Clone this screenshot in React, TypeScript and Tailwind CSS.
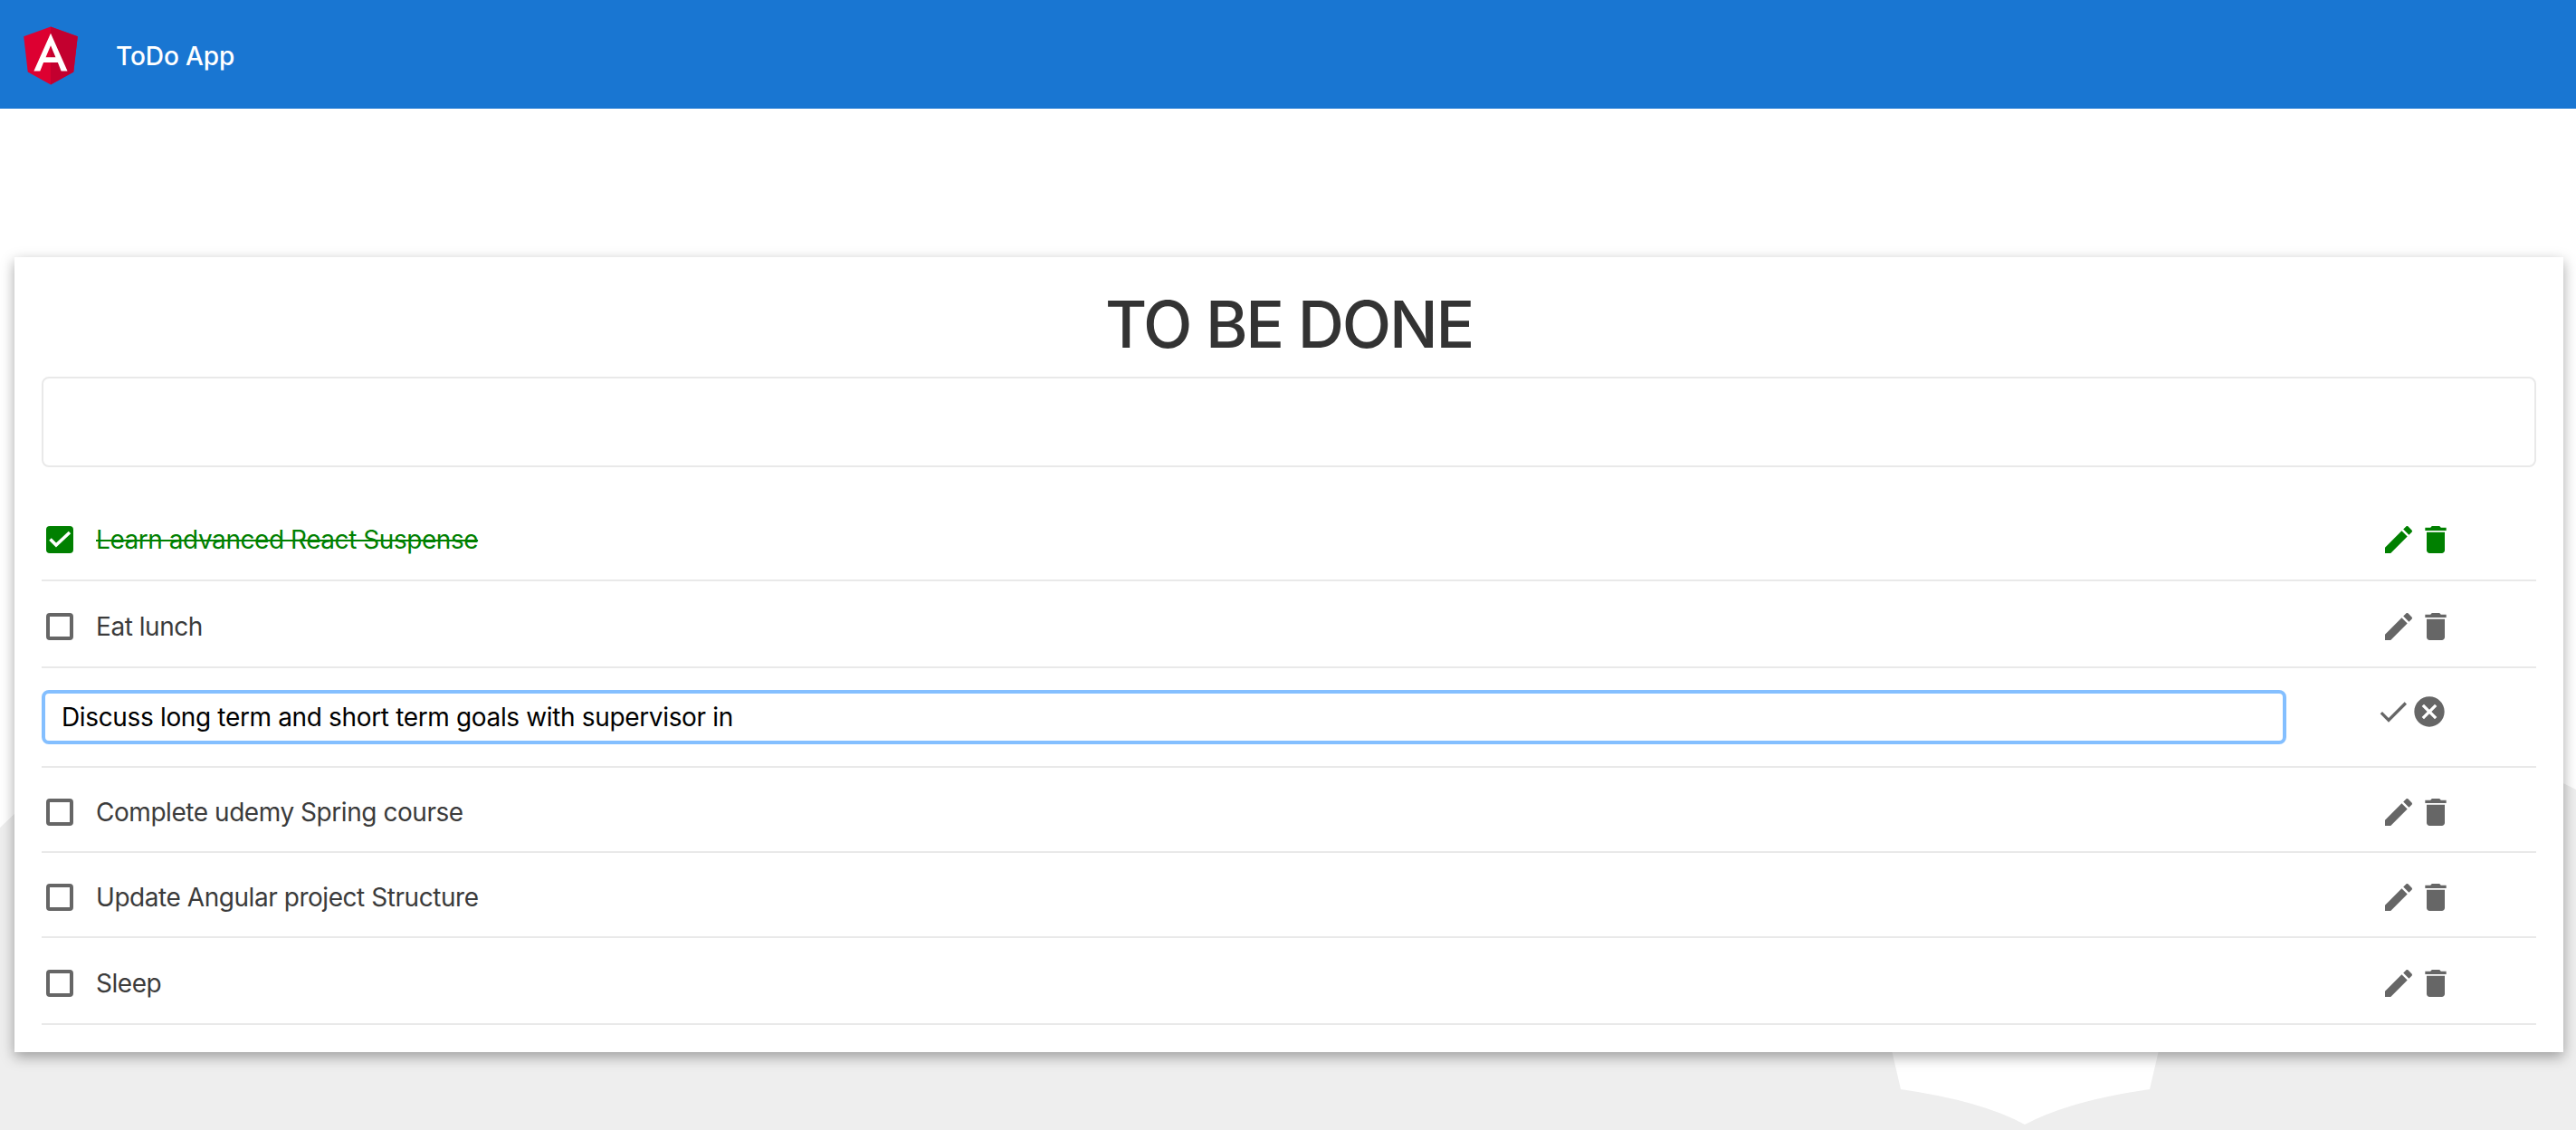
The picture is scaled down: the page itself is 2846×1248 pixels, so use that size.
import React from "react";

const todos = [
  { id: 1, text: "Learn advanced React Suspense", done: true, height: "h-[96px]" },
  { id: 2, text: "Eat lunch", done: false, height: "h-[96px]" },
  { id: 3, text: "Discuss long term and short term goals with supervisor in", editing: true },
  { id: 4, text: "Complete udemy Spring course", done: false, height: "h-[94px]" },
  { id: 5, text: "Update Angular project Structure", done: false, height: "h-[94px]" },
  { id: 6, text: "Sleep", done: false, height: "h-[96px]" },
];

const Icon = ({ d }: { d: string }) => (
  <svg viewBox="0 0 24 24" className="w-10 h-10 shrink-0" fill="currentColor">
    <path d={d} />
  </svg>
);

const editPath =
  "M3 17.25V21h3.75L17.81 9.94l-3.75-3.75L3 17.25zM20.71 7.04c.39-.39.39-1.02 0-1.41l-2.34-2.34c-.39-.39-1.02-.39-1.41 0l-1.83 1.83 3.75 3.75 1.83-1.83z";
const deletePath =
  "M6 19c0 1.1.9 2 2 2h8c1.1 0 2-.9 2-2V7H6v12zM19 4h-3.5l-1-1h-5l-1 1H5v2h14V4z";
const donePath = "M9 16.2L4.8 12l-1.4 1.4L9 19 21 7l-1.4-1.4L9 16.2z";
const cancelPath =
  "M12 2C6.47 2 2 6.47 2 12s4.47 10 10 10 10-4.47 10-10S17.53 2 12 2zm5 13.59L15.59 17 12 13.41 8.41 17 7 15.59 10.59 12 7 8.41 8.41 7 12 10.59 15.59 7 17 8.41 13.41 12 17 15.59z";

const AngularLogo = () => (
  <svg viewBox="0 0 250 250" className="w-20 h-20 shrink-0">
    <polygon fill="#DD0031" points="125,30 31.9,63.2 46.1,186.3 125,230 203.9,186.3 218.1,63.2" />
    <polygon fill="#C3002F" points="125,30 125,230 203.9,186.3 218.1,63.2" />
    <path
      fill="#FFFFFF"
      d="M125,52.1L66.8,182.6h21.7l11.7-29.2h49.4l11.7,29.2h21.7L125,52.1z M142,135.4H108l17-40.9L142,135.4z"
    />
  </svg>
);

const Row = ({ text, done, height }: { text: string; done?: boolean; height?: string }) => (
  <li
    className={`${height} flex items-center border-b-2 border-[#e9e9e9] pt-[5px] pl-[5px] pr-[91px] ${
      done ? "text-[#008000]" : "text-[#666666]"
    }`}
  >
    <span
      className={`w-[30px] h-[30px] rounded-[4px] flex items-center justify-center shrink-0 ${
        done ? "bg-[#008000]" : "border-4 border-[#666666]"
      }`}
    >
      {done && (
        <svg viewBox="0 0 30 30" className="w-[30px] h-[30px]" fill="none" stroke="#fff" strokeWidth="3.6">
          <path d="M4.5 14.5l6.5 6.5L26 7" />
        </svg>
      )}
    </span>
    <span
      className={`ml-[25px] flex-1 text-[28px] leading-[40px] tracking-[-0.45px] ${
        done ? "line-through" : "text-[#3b3b3b]"
      }`}
    >
      {text}
    </span>
    <div className="flex">
      <Icon d={editPath} />
      <div className="ml-px">
        <Icon d={deletePath} />
      </div>
    </div>
  </li>
);

const EditRow = ({ text }: { text: string }) => (
  <li className="h-[110px] flex items-start pt-6 border-b-2 border-[#e9e9e9] pr-[98px] text-[#666666]">
    <input
      readOnly
      value={text}
      className="w-[2480px] h-[60px] border-4 border-[#84bfff] rounded-lg px-[18px] text-[28px] tracking-[-0.35px] text-black outline-none bg-white"
    />
    <div className="flex ml-auto mt-[4px]">
      <Icon d={donePath} />
      <Icon d={cancelPath} />
    </div>
  </li>
);

export default function App() {
  return (
    <div className="relative h-[1248px] overflow-hidden bg-white font-['Inter',sans-serif]">
      {/* grey backdrop behind the card */}
      <svg className="absolute inset-0 w-full h-full" viewBox="0 0 2846 1248" preserveAspectRatio="none">
        <path
          fill="#eeeeee"
          d="M0 914L120 800H2700L2846 872V1248H0ZM2083 1130L2100 1203Q2190 1216 2237 1242Q2285 1216 2375 1203L2392 1130Z"
          fillRule="evenodd"
        />
      </svg>

      <header className="relative h-[120px] bg-[#1976d2] flex items-center pl-4">
        <AngularLogo />
        <span className="ml-8 pt-[3px] text-[28px] font-medium tracking-[-0.1px] text-white">ToDo App</span>
      </header>

      <main className="relative mt-[164px] ml-4 w-[2816px] h-[878px] bg-white px-[30px] shadow-[0_5px_14px_rgba(0,0,0,0.35)]">
        <h1 className="h-[132px] pt-[34px] text-center text-[71px] leading-[80px] font-medium tracking-[-2.2px] text-[#333333]">
          TO BE DONE
        </h1>
        <input
          readOnly
          className="block w-full h-[100px] border-2 border-[#e9e9e9] rounded-lg bg-white outline-none"
        />
        <ul className="mt-[30px]">
          {todos.map((t) =>
            t.editing ? (
              <EditRow key={t.id} text={t.text} />
            ) : (
              <Row key={t.id} text={t.text} done={t.done} height={t.height} />
            )
          )}
        </ul>
      </main>
    </div>
  );
}
